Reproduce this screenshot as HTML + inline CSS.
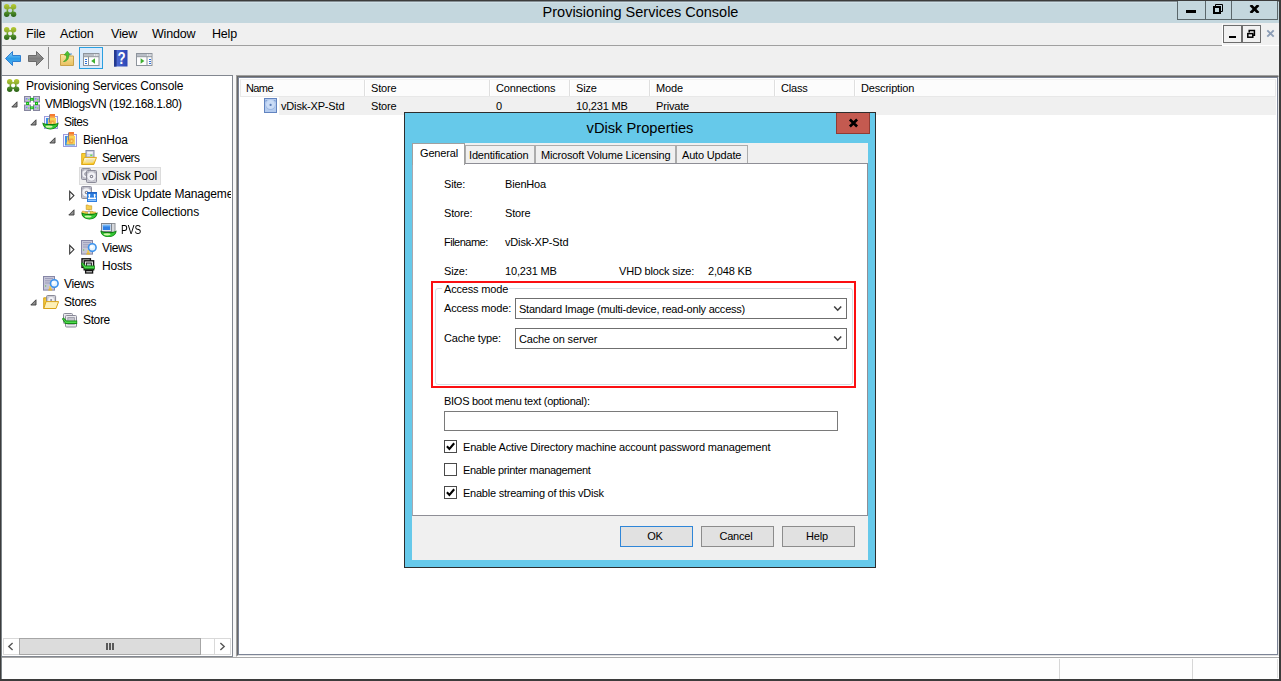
<!DOCTYPE html>
<html><head><meta charset="utf-8"><title>Provisioning Services Console</title>
<style>
*{box-sizing:border-box;margin:0;padding:0}
html,body{width:1281px;height:681px;overflow:hidden;background:#f0f0f0}
body{position:relative;font-family:"Liberation Sans",sans-serif;color:#000}
.abs{position:absolute}
#win{position:absolute;left:0;top:0;width:1281px;height:681px;border:1px solid #3c3c3c;border-right-width:2px;border-bottom-width:2px;border-top-width:2px;border-left-width:2px;background:#f0f0f0}
#titlebar{position:absolute;left:2px;top:2px;width:1277px;height:21px;background:#c4d7de}
#title{position:absolute;left:0;top:2px;width:1281px;text-align:center;font-size:14.5px;line-height:20px;color:#000}
.tb{position:absolute;top:1px;height:19px;border:1px solid #5b676b;border-top:none;background:#c4d7de}
#menubar{position:absolute;left:2px;top:23px;width:1277px;height:22px;background:#f0f0f0}
.mi{position:absolute;top:26px;font-size:12.5px;line-height:16px;letter-spacing:-0.2px}
#toolbar{position:absolute;left:2px;top:46px;width:1277px;height:29px;background:#f0f0f0}
.tree{font-size:12px;letter-spacing:-0.17px;line-height:18px;white-space:nowrap}
.tr{position:absolute;height:18px;margin-top:1px}
.dlg{font-size:11px;letter-spacing:-0.17px;white-space:nowrap;line-height:13px}
.t{position:absolute}
.btn{width:73px;height:21px;border:1px solid #8c8c8c;background:#e1e1e1;text-align:center;line-height:19px;padding-right:3px}
</style></head><body>
<div id="win"></div>
<div class="abs" style="left:1px;top:1px;width:1278px;height:1px;background:#858f94"></div>
<div class="abs" style="left:1px;top:1px;width:1px;height:678px;background:#7b8387"></div>
<div id="titlebar"></div>
<div class="abs" style="left:2px;top:2px;width:1277px;height:1px;background:#d0e0e7"></div>
<div class="abs" style="left:2px;top:2px;width:1px;height:21px;background:#d0e0e7"></div>
<div id="title">Provisioning Services Console</div>

<!-- caption buttons -->
<div class="tb" style="left:1177px;width:29px"></div>
<div class="tb" style="left:1205px;width:27px"></div>
<div class="tb" style="left:1231px;width:47px"></div>
<div class="abs" style="left:1186px;top:10px;width:10px;height:3px;background:#000"></div>
<svg class="abs" style="left:1212px;top:3px" width="12" height="12" viewBox="0 0 12 12"><path d="M3.5 3V1.5h7V8.5H9" fill="none" stroke="#000" stroke-width="1"/><rect x="2" y="4" width="6" height="6" fill="none" stroke="#000" stroke-width="2"/></svg>
<svg class="abs" style="left:1249px;top:5px" width="11" height="8" viewBox="0 0 11 8"><path d="M1.6 0L9.4 8M9.4 0L1.6 8" stroke="#000" stroke-width="2.7"/></svg>

<div id="menubar"></div>
<div class="abs" style="left:2px;top:45px;width:1220px;height:1px;background:#a0a0a0"></div>
<div class="mi" style="left:26px">File</div>
<div class="mi" style="left:60px">Action</div>
<div class="mi" style="left:111px">View</div>
<div class="mi" style="left:152px">Window</div>
<div class="mi" style="left:212px">Help</div>

<div id="toolbar"></div>
<svg class="abs" style="left:4px;top:4px" width="13" height="13" viewBox="0 0 13 13"><linearGradient id="ag1" gradientUnits="userSpaceOnUse" x1="0" y1="0" x2="0" y2="13"><stop offset="0" stop-color="#b9cb33"/><stop offset=".4" stop-color="#88ab2b"/><stop offset=".58" stop-color="#55942a"/><stop offset="1" stop-color="#2a6118"/></linearGradient><mask id="am1"><rect width="13" height="13" fill="#fff"/><circle cx="6.1" cy="6.5" r="2.1" fill="#000"/></mask><g mask="url(#am1)" fill="url(#ag1)"><circle cx="2.7" cy="2.7" r="2.7"/><circle cx="9.6" cy="2.7" r="2.7"/><circle cx="2.7" cy="10.3" r="2.7"/><circle cx="9.6" cy="10.3" r="2.7"/><circle cx="6.1" cy="6.5" r="3.5"/></g></svg>
<svg class="abs" style="left:4px;top:27px" width="13" height="13" viewBox="0 0 13 13"><linearGradient id="ag2" gradientUnits="userSpaceOnUse" x1="0" y1="0" x2="0" y2="13"><stop offset="0" stop-color="#b9cb33"/><stop offset=".4" stop-color="#88ab2b"/><stop offset=".58" stop-color="#55942a"/><stop offset="1" stop-color="#2a6118"/></linearGradient><mask id="am2"><rect width="13" height="13" fill="#fff"/><circle cx="6.1" cy="6.5" r="2.1" fill="#000"/></mask><g mask="url(#am2)" fill="url(#ag2)"><circle cx="2.7" cy="2.7" r="2.7"/><circle cx="9.6" cy="2.7" r="2.7"/><circle cx="2.7" cy="10.3" r="2.7"/><circle cx="9.6" cy="10.3" r="2.7"/><circle cx="6.1" cy="6.5" r="3.5"/></g></svg>
<!-- toolbar icons -->
<svg class="abs" style="left:4px;top:50px" width="18" height="17" viewBox="0 0 18 17"><linearGradient id="bk" x1="0" y1="0" x2="0" y2="1"><stop offset="0" stop-color="#8fd4fb"/><stop offset=".5" stop-color="#2d9be8"/><stop offset="1" stop-color="#4fb2f0"/></linearGradient><path d="M8.5 1.5L1.5 8.5L8.5 15.5V11.5H16.5V5.5H8.5z" fill="url(#bk)" stroke="#2f7fd0" stroke-width="1" stroke-linejoin="round"/></svg>
<svg class="abs" style="left:27px;top:50px" width="18" height="17" viewBox="0 0 18 17"><linearGradient id="fw" x1="0" y1="0" x2="0" y2="1"><stop offset="0" stop-color="#a9a9a9"/><stop offset=".5" stop-color="#7d7d7d"/><stop offset="1" stop-color="#999"/></linearGradient><path d="M9.5 1.5L16.5 8.5L9.5 15.5V11.5H1.5V5.5H9.5z" fill="url(#fw)" stroke="#6b6b6b" stroke-width="1" stroke-linejoin="round"/></svg>
<div class="abs" style="left:48px;top:47px;width:1px;height:22px;background:#8d8d8d"></div>
<svg class="abs" style="left:59px;top:50px" width="16" height="17" viewBox="0 0 16 17"><linearGradient id="fo" x1="0" y1="0" x2="0" y2="1"><stop offset="0" stop-color="#fbe5a0"/><stop offset="1" stop-color="#e9c060"/></linearGradient><path d="M1.5 4.5H6l1 1.5h7.5V15.5H1.5z" fill="url(#fo)" stroke="#c9a24a"/><path d="M4.5 11.5C7 10.5 8 8 7.5 5H5.2L8.3 1.2 11.5 5H9.6C10 9 8 11.5 4.5 11.5z" fill="#4fc12f" stroke="#2f9a1c" stroke-width=".6"/><rect x="10.5" y="3.5" width="2.5" height="1" fill="#5a8fd8"/></svg>
<div class="abs" style="left:79px;top:47px;width:24px;height:22px;border:1px solid #2a9fe0;background:#dbeafa"></div>
<svg class="abs" style="left:83px;top:53px" width="17" height="13" viewBox="0 0 17 13"><rect x=".5" y=".5" width="15.5" height="12" fill="#fdfdfd" stroke="#8e949c"/><rect x="1" y="1" width="14.5" height="2.2" fill="#b9bec6"/><rect x="11" y="1.4" width="1.4" height="1.2" fill="#fff"/><rect x="13.2" y="1.4" width="1.4" height="1.2" fill="#fff"/><path d="M.5 3.7H16M5.5 3.7V12.5" stroke="#8e949c"/><g fill="#2f6fd8" shape-rendering="crispEdges"><rect x="2" y="6" width="2" height="1"/><rect x="2" y="8" width="2" height="1"/><rect x="2" y="10" width="2" height="1"/></g><path d="M12 5.2V10.8L8.2 8z" fill="#3fb030"/></svg>
<svg class="abs" style="left:114px;top:50px" width="14" height="17" viewBox="0 0 14 17"><linearGradient id="hp" x1="0" y1="0" x2="1" y2="0"><stop offset="0" stop-color="#2a3f9a"/><stop offset=".25" stop-color="#4a67d0"/><stop offset="1" stop-color="#2b45b5"/></linearGradient><rect x="0" y="0" width="13.5" height="16.5" fill="url(#hp)"/><rect x="0" y="0" width="2.5" height="16.5" fill="#243a90"/><text x="0" y="0" transform="translate(7.6 14.3) scale(.78 1)" font-family="Liberation Sans, sans-serif" font-size="17" font-weight="bold" fill="#fff" text-anchor="middle">?</text></svg>
<svg class="abs" style="left:136px;top:53px" width="17" height="13" viewBox="0 0 17 13"><rect x=".5" y=".5" width="15.5" height="12" fill="#fdfdfd" stroke="#8e949c"/><rect x="1" y="1" width="14.5" height="2.2" fill="#b9bec6"/><rect x="11" y="1.4" width="1.4" height="1.2" fill="#fff"/><rect x="13.2" y="1.4" width="1.4" height="1.2" fill="#fff"/><path d="M.5 3.7H16M11 3.7V12.5" stroke="#8e949c"/><g fill="#2f6fd8" shape-rendering="crispEdges"><rect x="13" y="6" width="2" height="1"/><rect x="13" y="8" width="2" height="1"/><rect x="13" y="10" width="2" height="1"/></g><path d="M4.6 5.2V10.8L8.4 8z" fill="#3fb030"/></svg>

<!-- mdi child buttons -->
<div class="abs" style="left:1222px;top:24px;width:57px;height:22px;background:#f0f0f0;border-left:1px solid #fff;border-bottom:1px solid #fff"></div>
<div class="abs" style="left:1223px;top:25px;width:19px;height:18px;border:1px solid #6d6d6d;background:#f1f1f1"></div>
<div class="abs" style="left:1242px;top:25px;width:19px;height:18px;border:1px solid #6d6d6d;background:#f1f1f1"></div>
<div class="abs" style="left:1229px;top:36px;width:7px;height:2px;background:#000"></div>
<svg class="abs" style="left:1246px;top:29px" width="10" height="10" viewBox="0 0 10 10"><path d="M3.2 3.5V1.6h5.2v4.6H7" fill="none" stroke="#000" stroke-width="1.5"/><rect x="1.8" y="4.6" width="5" height="3.6" fill="none" stroke="#000" stroke-width="1.5"/></svg>
<svg class="abs" style="left:1266px;top:29px" width="9" height="9" viewBox="0 0 9 9"><path d="M1.3 1.3L7.7 7.7M7.7 1.3L1.3 7.7" stroke="#8c9db5" stroke-width="1.9"/></svg>

<!-- left pane -->
<div class="abs" id="lpane" style="left:2px;top:75px;width:231px;height:582px;background:#fff;border:1px solid #828790;border-left:none"></div>
<!-- right pane -->
<div class="abs" style="left:233px;top:76px;width:3px;height:581px;background:#f7f7f7"></div>
<div class="abs" style="left:236px;top:75px;width:1043px;height:582px;background:#fff;border:1px solid #a0a0a0;border-right-color:#fff;border-bottom-color:#fff"></div>
<div class="abs" style="left:237px;top:76px;width:1042px;height:580px;background:#fff;border:1px solid #696969;border-right-color:#e3e3e3;border-bottom-color:#e3e3e3"></div>
<div class="abs" id="rpane" style="left:238px;top:77px;width:1040px;height:578px;background:#fff;border:1px solid #7c8496"></div>

<!-- TREE -->
<div class="tree">
<div class="abs" style="left:79px;top:167px;width:82px;height:18px;background:#efefef;border:1px solid #dcdcdc"></div>
<div class="tr" style="left:26px;top:76px">Provisioning Services Console</div>
<div class="tr" style="left:45px;top:94px;letter-spacing:-0.39px">VMBlogsVN (192.168.1.80)</div>
<div class="tr" style="left:64px;top:112px;letter-spacing:-0.55px">Sites</div>
<div class="tr" style="left:83px;top:130px">BienHoa</div>
<div class="tr" style="left:102px;top:148px;letter-spacing:-0.56px">Servers</div>
<div class="tr" style="left:102px;top:166px">vDisk Pool</div>
<div class="tr" style="left:102px;top:184px;width:129px;overflow:hidden">vDisk Update Management</div>
<div class="tr" style="left:102px;top:202px;letter-spacing:-0.09px">Device Collections</div>
<div class="tr" style="left:121px;top:220px;transform:scaleX(.84);transform-origin:0 0;letter-spacing:0">PVS</div>
<div class="tr" style="left:102px;top:238px;letter-spacing:-0.37px">Views</div>
<div class="tr" style="left:102px;top:256px">Hosts</div>
<div class="tr" style="left:64px;top:274px;letter-spacing:-0.37px">Views</div>
<div class="tr" style="left:64px;top:292px;letter-spacing:-0.42px">Stores</div>
<div class="tr" style="left:83px;top:310px;letter-spacing:-0.37px">Store</div>
</div>
<!-- expanders -->
<svg class="abs" style="left:11px;top:101px" width="7" height="7" viewBox="0 0 7 7"><path d="M6 .8V6H.8z" fill="#909090" stroke="#3a3a3a" stroke-width=".9"/></svg>
<svg class="abs" style="left:30px;top:119px" width="7" height="7" viewBox="0 0 7 7"><path d="M6 .8V6H.8z" fill="#909090" stroke="#3a3a3a" stroke-width=".9"/></svg>
<svg class="abs" style="left:49px;top:137px" width="7" height="7" viewBox="0 0 7 7"><path d="M6 .8V6H.8z" fill="#909090" stroke="#3a3a3a" stroke-width=".9"/></svg>
<svg class="abs" style="left:68px;top:209px" width="7" height="7" viewBox="0 0 7 7"><path d="M6 .8V6H.8z" fill="#909090" stroke="#3a3a3a" stroke-width=".9"/></svg>
<svg class="abs" style="left:30px;top:299px" width="7" height="7" viewBox="0 0 7 7"><path d="M6 .8V6H.8z" fill="#909090" stroke="#3a3a3a" stroke-width=".9"/></svg>
<svg class="abs" style="left:69px;top:190px" width="6" height="11" viewBox="0 0 6 11"><path d="M.7 1.4V9.8L4.9 5.6z" fill="#fff" stroke="#333" stroke-width="1.1"/></svg>
<svg class="abs" style="left:69px;top:244px" width="6" height="11" viewBox="0 0 6 11"><path d="M.7 1.4V9.8L4.9 5.6z" fill="#fff" stroke="#333" stroke-width="1.1"/></svg>
<!-- tree icons -->
<svg class="abs" style="left:6.5px;top:79px" width="13" height="13" viewBox="0 0 13 13"><linearGradient id="ag3" gradientUnits="userSpaceOnUse" x1="0" y1="0" x2="0" y2="13"><stop offset="0" stop-color="#b9cb33"/><stop offset=".4" stop-color="#88ab2b"/><stop offset=".58" stop-color="#55942a"/><stop offset="1" stop-color="#2a6118"/></linearGradient><mask id="am3"><rect width="13" height="13" fill="#fff"/><circle cx="6.1" cy="6.5" r="2.1" fill="#000"/></mask><g mask="url(#am3)" fill="url(#ag3)"><circle cx="2.7" cy="2.7" r="2.7"/><circle cx="9.6" cy="2.7" r="2.7"/><circle cx="2.7" cy="10.3" r="2.7"/><circle cx="9.6" cy="10.3" r="2.7"/><circle cx="6.1" cy="6.5" r="3.5"/></g></svg>
<svg class="abs" style="left:24px;top:96px" width="16" height="15" viewBox="0 0 16 15"><rect x="0.5" y="0.5" width="6" height="5.5" fill="#b4aedc" stroke="#86869e"/><path d="M1.4 1.6h4.2" stroke="#cfcfd8" stroke-width=".9"/><path d="M1.4 4.6h4.2" stroke="#c4c4cc" stroke-width=".9"/><rect x="2" y="2.3" width="1.3" height="1" fill="#4f8fe0"/><rect x="4" y="2.9" width="1.4" height="1.3" fill="#7cf04c"/><rect x="9.5" y="0.5" width="6" height="5.5" fill="#b4aedc" stroke="#86869e"/><path d="M10.4 1.6h4.2" stroke="#cfcfd8" stroke-width=".9"/><path d="M10.4 4.6h4.2" stroke="#c4c4cc" stroke-width=".9"/><rect x="11" y="2.3" width="1.3" height="1" fill="#4f8fe0"/><rect x="13" y="2.9" width="1.4" height="1.3" fill="#7cf04c"/><rect x="0.5" y="9.0" width="6" height="5.5" fill="#b4aedc" stroke="#86869e"/><path d="M1.4 10.1h4.2" stroke="#cfcfd8" stroke-width=".9"/><path d="M1.4 13.1h4.2" stroke="#c4c4cc" stroke-width=".9"/><rect x="2" y="10.8" width="1.3" height="1" fill="#4f8fe0"/><rect x="4" y="11.4" width="1.4" height="1.3" fill="#7cf04c"/><rect x="9.5" y="9.0" width="6" height="5.5" fill="#b4aedc" stroke="#86869e"/><path d="M10.4 10.1h4.2" stroke="#cfcfd8" stroke-width=".9"/><path d="M10.4 13.1h4.2" stroke="#c4c4cc" stroke-width=".9"/><rect x="11" y="10.8" width="1.3" height="1" fill="#4f8fe0"/><rect x="13" y="11.4" width="1.4" height="1.3" fill="#7cf04c"/><path d="M3.5 6.5v2M12.5 6.5v2" stroke="#1fb81f" stroke-width="1.4"/><g fill="#13b613"><rect x="6.2" y="1.9" width="3.6" height="2.8"/><rect x="6.2" y="10.4" width="3.6" height="2.8"/><rect x="2.1" y="6" width="3" height="3"/><rect x="11" y="6" width="3" height="3"/></g><g fill="#9cf48c"><rect x="7.2" y="2.9" width="1.2" height=".9"/><rect x="7" y="11.4" width="1.8" height=".9"/><rect x="3.1" y="7" width="1" height="1"/><rect x="12" y="7" width="1" height="1"/></g></svg>
<svg class="abs" style="left:42px;top:113.5px" width="17" height="17" viewBox="0 0 17 17"><rect x="2.5" y="2.5" width="13" height="12" fill="#f4f4ff" stroke="#9c9cdc"/><rect x="4" y="4" width="10" height="9.5" fill="#3f8fe6"/><path d="M7 4h7v8.4h-8.4c-.6-1.6 1-2.6 .6-4.2s0-3 .8-4.2z" fill="#f7d357"/><path d="M8.4 6.6h3.8l.6 2.2-1.2 2.6h-3.4l-.8-2.2z" fill="#f2a544"/><path d="M10 8l1.6.4-.4 1.6-1.6-.2z" fill="#f9e27a"/><path d="M7.5 0.5V8.5" stroke="#7c7c94" stroke-width="1"/><rect x="8" y="0" width="5" height="3.8" fill="#f37b34"/><rect x="8" y="2.4" width="5" height="1.4" fill="#f9ae48"/><path d="M0.40000000000000036 8.6C0.6000000000000003 17.67 16.400000000000002 17.67 16.6 8.6C13.600000000000001 10.60 3.4000000000000004 10.60 0.40000000000000036 8.6z" fill="#0f800f"/><path d="M1.5000000000000004 10.1C3.0000000000000004 16.49 14.000000000000002 16.49 15.500000000000002 10.1C12.600000000000001 12.00 4.4 12.00 1.5000000000000004 10.1z" fill="#35c835"/><ellipse cx="7.1" cy="12.68" rx="3.4" ry="1.1" fill="#e4fcb8" opacity=".9"/></svg>
<svg class="abs" style="left:63px;top:132px" width="15" height="16" viewBox="0 0 15 16"><rect x="0.5" y="2.5" width="13" height="12" fill="#f4f4ff" stroke="#9c9cdc"/><rect x="2" y="4" width="10" height="9.5" fill="#3f8fe6"/><path d="M5 4h7v8.4h-8.4c-.6-1.6 1-2.6 .6-4.2s0-3 .8-4.2z" fill="#f7d357"/><path d="M6.4 6.6h3.8l.6 2.2-1.2 2.6h-3.4l-.8-2.2z" fill="#f2a544"/><path d="M8 8l1.6.4-.4 1.6-1.6-.2z" fill="#f9e27a"/><path d="M5.5 0.5V8.5" stroke="#7c7c94" stroke-width="1"/><rect x="6" y="0" width="5" height="3.8" fill="#f37b34"/><rect x="6" y="2.4" width="5" height="1.4" fill="#f9ae48"/></svg>
<svg class="abs" style="left:81px;top:149.5px" width="16" height="15" viewBox="0 0 16 15"><linearGradient id="sfg" x1="0" y1="0" x2=".3" y2="1"><stop offset="0" stop-color="#fffdf0"/><stop offset=".55" stop-color="#fdeaa0"/><stop offset="1" stop-color="#f8c826"/></linearGradient><path d="M.7 3.5h4.3l1 1.2h6.2V14.5H.7z" fill="#f9cf36" stroke="#dba716" stroke-width=".9"/><rect x="5" y=".5" width="8" height="9" fill="#c4c8e0" stroke="#8a90a8"/><rect x="6.2" y="1.8" width="5.6" height="2" fill="#f4f6fa"/><rect x="6.2" y="4.6" width="5.6" height="1.4" fill="#dfe3ee"/><rect x="9.2" y="4.6" width="2.2" height="1.3" fill="#5fdc3f"/><path d="M.9 14.5L3.2 7.4H15.5L12.8 14.5z" fill="url(#sfg)" stroke="#e0a918" stroke-width="1"/><path d="M4.4 12.6h7.4l.9-3.2h-7.4z" fill="#e8dcae" opacity=".8"/></svg>
<svg class="abs" style="left:81px;top:168px" width="17" height="15" viewBox="0 0 17 15"><rect x="0.5" y="0.5" width="9" height="11" rx="1" fill="#c2c2cb" stroke="#8e8e9c"/><path d="M1.4 1.4h1.8l-1.8 1.8zM8.6 1.4h-1.8l1.8 1.8z" fill="#8e8e9c" opacity=".7"/><circle cx="5.0" cy="6.5" r="3.7" fill="#a2a2b0"/><circle cx="5.0" cy="6.0" r="3.7" fill="#f6f6fa" opacity=".95"/><circle cx="5.0" cy="6.0" r="1.7" fill="#82828f"/><circle cx="5.0" cy="6.0" r=".7" fill="#fff"/><rect x="5.5" y="2.5" width="10" height="12" rx="1" fill="#cacad2" stroke="#8a8a98"/><path d="M6.4 3.4h1.8l-1.8 1.8zM14.6 3.4h-1.8l1.8 1.8z" fill="#8a8a98" opacity=".7"/><circle cx="10.5" cy="9.0" r="4.2" fill="#a2a2b0"/><circle cx="10.5" cy="8.5" r="4.2" fill="#f6f6fa" opacity=".95"/><circle cx="10.5" cy="8.5" r="1.7" fill="#82828f"/><circle cx="10.5" cy="8.5" r=".7" fill="#fff"/></svg>
<svg class="abs" style="left:81px;top:186px" width="17" height="16" viewBox="0 0 17 16"><rect x="0.5" y="0.5" width="10" height="12" rx="1" fill="#c2c2cb" stroke="#8e8e9c"/><path d="M1.4 1.4h1.8l-1.8 1.8zM9.6 1.4h-1.8l1.8 1.8z" fill="#8e8e9c" opacity=".7"/><circle cx="5.5" cy="7.0" r="4.2" fill="#a2a2b0"/><circle cx="5.5" cy="6.5" r="4.2" fill="#f6f6fa" opacity=".95"/><circle cx="5.5" cy="6.5" r="1.7" fill="#82828f"/><circle cx="5.5" cy="6.5" r=".7" fill="#fff"/><rect x="6" y="6" width="10" height="10" fill="#2f7fe0"/><rect x="6" y="6" width="10" height="1.4" fill="#1f63c4"/><path d="M8.4 8.8v3M13.6 8.8v3" stroke="#fff" stroke-width="1.2"/><circle cx="8.4" cy="9" r="1" fill="#fff"/><circle cx="13.6" cy="9" r="1" fill="#fff"/><rect x="7" y="11.6" width="8" height="1.4" fill="#fff"/><rect x="7" y="13.6" width="8" height="1.4" fill="#8fc4ff"/></svg>
<svg class="abs" style="left:80.5px;top:203.5px" width="17" height="17" viewBox="0 0 17 17"><path d="M8 4.5v3M4 9V7.5h8V9" fill="none" stroke="#9aa6c8" stroke-width=".9"/><path d="M5.2 1h2l.6.8h2.9v3.7h-5.5z" fill="#f6cf52" stroke="#c9971f" stroke-width=".6"/><path d="M1.2 7.2h2l.6.8h2.9v3.7h-5.5z" fill="#f6cf52" stroke="#c9971f" stroke-width=".6"/><path d="M9.2 7.2h2l.6.8h2.9v3.7h-5.5z" fill="#f6cf52" stroke="#c9971f" stroke-width=".6"/><path d="M0.40000000000000036 8.2C0.6000000000000003 17.80 16.400000000000002 17.80 16.6 8.2C13.600000000000001 10.20 3.4000000000000004 10.20 0.40000000000000036 8.2z" fill="#0f800f"/><path d="M1.5000000000000004 9.7C3.0000000000000004 16.55 14.000000000000002 16.55 15.500000000000002 9.7C12.600000000000001 11.60 4.4 11.60 1.5000000000000004 9.7z" fill="#35c835"/><ellipse cx="7.1" cy="12.52" rx="3.4" ry="1.1" fill="#e4fcb8" opacity=".9"/></svg>
<svg class="abs" style="left:99.5px;top:221.5px" width="17" height="17" viewBox="0 0 17 17"><rect x="9.5" y="1.5" width="5.5" height="9" fill="#d6d8dc" stroke="#8e9298"/><rect x="1.5" y="1.5" width="10" height="8" fill="#e6e8ec" stroke="#7e848c"/><rect x="2.8" y="2.8" width="7.4" height="5.2" fill="#2f7fe4"/><rect x="2.8" y="2.8" width="7.4" height="1.6" fill="#6fb4f4"/><rect x="4.5" y="10" width="4" height="1.5" fill="#9aa0a8"/><path d="M0.40000000000000036 8.4C0.6000000000000003 17.20 16.400000000000002 17.20 16.6 8.4C13.600000000000001 10.40 3.4000000000000004 10.40 0.40000000000000036 8.4z" fill="#0f800f"/><path d="M1.5000000000000004 9.9C3.0000000000000004 16.06 14.000000000000002 16.06 15.500000000000002 9.9C12.600000000000001 11.80 4.4 11.80 1.5000000000000004 9.9z" fill="#35c835"/><ellipse cx="7.1" cy="12.36" rx="3.4" ry="1.1" fill="#e4fcb8" opacity=".9"/></svg>
<svg class="abs" style="left:81px;top:240px" width="16" height="15" viewBox="0 0 16 15"><rect x=".5" y=".5" width="11" height="13.6" fill="#c6c6d8" stroke="#8686a6"/><path d="M2 2.6h8M2 4.8h8M2 7h5" stroke="#9c9cba" stroke-width="1"/><rect x="2" y="9.4" width="1.2" height="1.2" fill="#6fc05f"/><path d="M5.2 14.4c.2-1.6 1-2.2 2-2.2s1.8.6 2 2.2z" fill="#e9b830"/><circle cx="7.2" cy="11.2" r="1.1" fill="#f3cb52"/><circle cx="11.3" cy="7.6" r="3.8" fill="#e6f4ff" stroke="#3c92ec" stroke-width="1.6"/><circle cx="10.6" cy="6.8" r="1.6" fill="#fff"/></svg>
<svg class="abs" style="left:81px;top:258px" width="16" height="16" viewBox="0 0 16 16"><rect x="1" y=".8" width="8.4" height="8.6" fill="#f4f4f4" stroke="#111" stroke-width="1.4"/><rect x="3.2" y="2.8" width="9.4" height="9" fill="#f4f4f4" stroke="#111" stroke-width="1.4"/><rect x="5.4" y="5" width="5" height="3.4" fill="#b8c4cc" stroke="#222" stroke-width="1"/><rect x="4.6" y="12.6" width="7" height="2.4" fill="#e0e0e0" stroke="#111" stroke-width="1.3"/><path d="M-.2 5.6L1.6 4.2 4.6 7.6H13.8V11.2H3.4z" fill="#178a17"/><path d="M.9 5.6L1.5 5.2 4.2 8.4H13V10.3H3.8z" fill="#4fdc4f"/></svg>
<svg class="abs" style="left:43px;top:276px" width="16" height="15" viewBox="0 0 16 15"><rect x=".5" y=".5" width="11" height="13.6" fill="#c6c6d8" stroke="#8686a6"/><path d="M2 2.6h8M2 4.8h8M2 7h5" stroke="#9c9cba" stroke-width="1"/><rect x="2" y="9.4" width="1.2" height="1.2" fill="#6fc05f"/><path d="M5.2 14.4c.2-1.6 1-2.2 2-2.2s1.8.6 2 2.2z" fill="#e9b830"/><circle cx="7.2" cy="11.2" r="1.1" fill="#f3cb52"/><circle cx="11.3" cy="7.6" r="3.8" fill="#e6f4ff" stroke="#3c92ec" stroke-width="1.6"/><circle cx="10.6" cy="6.8" r="1.6" fill="#fff"/></svg>
<svg class="abs" style="left:43px;top:294.5px" width="16" height="14" viewBox="0 0 16 14"><path d="M.7 2.8h3.6l1 1.2h7.2V13.5H.7z" fill="#f5c93a" stroke="#cf9c12" stroke-width=".9"/><rect x="3.6" y=".5" width="9" height="9" rx="1" fill="#cdcdd4" stroke="#8a8a98"/><circle cx="8.1" cy="5" r="2.9" fill="#f2f2f6"/><circle cx="8.1" cy="5" r="1" fill="#8a8a98"/><path d="M.8 13.5L3 6.6H15.6L13 13.5z" fill="#fdf0b8" stroke="#d9a41a" stroke-width="1"/></svg>
<svg class="abs" style="left:62px;top:312.5px" width="16" height="15" viewBox="0 0 16 15"><rect x="1.5" y=".5" width="9" height="10" rx="1" fill="#e8e8ec" stroke="#8a8a98"/><rect x="3.5" y="2.5" width="11" height="11.5" rx="1" fill="#e8e8ec" stroke="#8a8a98"/><rect x="5.8" y="4.6" width="6.6" height="6.6" fill="#c4c4cc" stroke="#9696a4" stroke-width=".8"/><path d="M-.2 5.8L1.6 4.4 4.6 7.6H15.2V11H3.4z" fill="#178a17"/><path d="M.9 5.8L1.5 5.4 4.2 8.4H14.4V10.1H3.8z" fill="#4fdc4f"/></svg>
<!-- tree hscroll -->
<div class="abs" style="left:2px;top:637px;width:230px;height:19px;background:#fff"></div>
<div class="abs" style="left:3px;top:638px;width:228px;height:17px;border:1px solid #d9d9d9;background:#fff"></div>
<div class="abs" style="left:214px;top:638px;width:1px;height:17px;background:#d9d9d9"></div>
<div class="abs" style="left:19px;top:638px;width:182px;height:17px;border:1px solid #a6a6a6;background:#dcdcdc"></div>
<svg class="abs" style="left:7px;top:642px" width="8" height="9" viewBox="0 0 8 9"><path d="M5.6 1L1.8 4.5 5.6 8" fill="none" stroke="#555" stroke-width="1.4"/></svg>
<svg class="abs" style="left:218px;top:642px" width="8" height="9" viewBox="0 0 8 9"><path d="M2.4 1L6.2 4.5 2.4 8" fill="none" stroke="#555" stroke-width="1.4"/></svg>
<div class="abs" style="left:106px;top:643px;width:2px;height:7px;background:#5a5a5a"></div>
<div class="abs" style="left:109px;top:643px;width:2px;height:7px;background:#5a5a5a"></div>
<div class="abs" style="left:112px;top:643px;width:2px;height:7px;background:#5a5a5a"></div>
<!-- status bar -->
<div class="abs" style="left:2px;top:657px;width:1277px;height:22px;background:#fefefe;border-top:1px solid #a9a9a9"></div>

<!-- LIST VIEW -->
<div class="abs" style="left:240px;top:79px;width:1036px;height:18px;background:#fcfcfc;border:1px solid #e8e8e8;border-top-color:#f0f0f0"></div>
<div class="abs" style="left:364px;top:80px;width:2px;height:16px;background:#dfdfdf;border-right:1px solid #fff"></div>
<div class="abs" style="left:489px;top:80px;width:2px;height:16px;background:#dfdfdf;border-right:1px solid #fff"></div>
<div class="abs" style="left:569px;top:80px;width:2px;height:16px;background:#dfdfdf;border-right:1px solid #fff"></div>
<div class="abs" style="left:649px;top:80px;width:2px;height:16px;background:#dfdfdf;border-right:1px solid #fff"></div>
<div class="abs" style="left:774px;top:80px;width:2px;height:16px;background:#dfdfdf;border-right:1px solid #fff"></div>
<div class="abs" style="left:854px;top:80px;width:2px;height:16px;background:#dfdfdf;border-right:1px solid #fff"></div>
<div class="abs" style="left:279px;top:97px;width:997px;height:18px;background:#f0f0f0"></div>
<div class="dlg">
<div class="t" style="left:246px;top:82px;letter-spacing:-0.6px">Name</div>
<div class="t" style="left:371px;top:82px">Store</div>
<div class="t" style="left:496px;top:82px">Connections</div>
<div class="t" style="left:576px;top:82px">Size</div>
<div class="t" style="left:656px;top:82px">Mode</div>
<div class="t" style="left:781px;top:82px">Class</div>
<div class="t" style="left:861px;top:82px">Description</div>
<div class="t" style="left:281px;top:100px">vDisk-XP-Std</div>
<div class="t" style="left:371px;top:100px">Store</div>
<div class="t" style="left:496px;top:100px">0</div>
<div class="t" style="left:576px;top:100px">10,231 MB</div>
<div class="t" style="left:656px;top:100px">Private</div>
</div>
<svg class="abs" style="left:264px;top:98px" width="13" height="15" viewBox="0 0 13 15"><rect x=".5" y=".5" width="12" height="14" fill="#b4cbee" stroke="#6284c0"/><path d="M1.5 2v2.2L3.4 2zM11.5 2v2.2L9.6 2z" fill="#7f9fd2"/><circle cx="6.5" cy="7.4" r="4.7" fill="#9bb7e2"/><circle cx="6.5" cy="6.6" r="4.5" fill="#cadcf6"/><circle cx="6.6" cy="6.9" r="1.1" fill="#5a7cb6"/></svg>
<!-- STATUS dividers -->
<div class="abs" style="left:1059px;top:659px;width:1px;height:20px;background:#d7d7d7"></div>
<div class="abs" style="left:1192px;top:659px;width:1px;height:20px;background:#d7d7d7"></div>
<div class="abs" style="left:1277px;top:659px;width:1px;height:19px;background:#dcdcdc"></div>

<!-- DIALOG -->
<div class="abs" style="left:404px;top:112px;width:472px;height:456px;background:#66c9ea;border:1px solid #2d2d2d"></div>
<div class="abs" style="left:404px;top:117px;width:472px;text-align:center;font-size:14.7px;line-height:22px">vDisk Properties</div>
<div class="abs" style="left:836px;top:113px;width:34px;height:21px;background:#c45a50;border:1px solid #8f3b34;border-top:none"></div>
<svg class="abs" style="left:848px;top:118px" width="11" height="10" viewBox="0 0 11 10"><path d="M1.9 1.6L9.1 8.4M9.1 1.6L1.9 8.4" stroke="#000" stroke-width="2.7"/></svg>
<!-- client -->
<div class="abs" style="left:412px;top:143px;width:456px;height:417px;background:#f0f0f0"></div>
<!-- tab page -->
<div class="abs" style="left:412px;top:163px;width:456px;height:353px;background:#fff;border:1px solid #8e8e96;border-left-color:#a8a8b0"></div>
<!-- tabs -->
<div class="abs" style="left:465px;top:145px;width:70px;height:18px;background:#f0f0f0;border:1px solid #acacac;border-bottom:none"></div>
<div class="abs" style="left:535px;top:145px;width:141px;height:18px;background:#f0f0f0;border:1px solid #acacac;border-bottom:none"></div>
<div class="abs" style="left:676px;top:145px;width:72px;height:18px;background:#f0f0f0;border:1px solid #acacac;border-bottom:none"></div>
<div class="abs" style="left:412px;top:143px;width:53px;height:22px;background:#fff;border:1px solid #a0a0a0;border-bottom:none"></div>
<div class="dlg">
<div class="t" style="left:420px;top:147px">General</div>
<div class="t" style="left:469px;top:149px">Identification</div>
<div class="t" style="left:541px;top:149px">Microsoft Volume Licensing</div>
<div class="t" style="left:682px;top:149px">Auto Update</div>
<div class="t" style="left:444px;top:178px">Site:</div><div class="t" style="left:505px;top:178px">BienHoa</div>
<div class="t" style="left:444px;top:207px">Store:</div><div class="t" style="left:505px;top:207px">Store</div>
<div class="t" style="left:444px;top:236px;letter-spacing:-0.5px">Filename:</div><div class="t" style="left:505px;top:236px">vDisk-XP-Std</div>
<div class="t" style="left:444px;top:265px">Size:</div><div class="t" style="left:505px;top:265px">10,231 MB</div>
<div class="t" style="left:619px;top:265px">VHD block size:</div><div class="t" style="left:708px;top:265px">2,048 KB</div>
</div>
<!-- groupbox -->
<div class="abs" style="left:435px;top:288px;width:418px;height:97px;border:1px solid #d5dfe5;border-radius:3px"></div>
<div class="abs dlg" style="left:442px;top:283px;width:67px;height:12px;background:#fff;padding-left:2px">Access mode</div>
<!-- red highlight -->
<div class="abs" style="left:431px;top:281px;width:425px;height:107px;border:2px solid #fb0f12"></div>
<div class="dlg">
<div class="t" style="left:444px;top:302px">Access mode:</div>
<div class="t" style="left:444px;top:332px">Cache type:</div>
</div>
<div class="abs dlg" style="left:515px;top:298px;width:332px;height:21px;border:1px solid #6f6f6f;background:#fff;padding:4px 0 0 3px;letter-spacing:-0.225px">Standard Image (multi-device, read-only access)</div>
<div class="abs dlg" style="left:515px;top:328px;width:332px;height:21px;border:1px solid #6f6f6f;background:#fff;padding:4px 0 0 3px">Cache on server</div>
<svg class="abs" style="left:833px;top:305px" width="10" height="8" viewBox="0 0 10 8"><path d="M1.2 1.5L4.7 5.2 8.2 1.5" fill="none" stroke="#404040" stroke-width="1.6"/></svg>
<svg class="abs" style="left:833px;top:335px" width="10" height="8" viewBox="0 0 10 8"><path d="M1.2 1.5L4.7 5.2 8.2 1.5" fill="none" stroke="#404040" stroke-width="1.6"/></svg>
<!-- bios -->
<div class="abs dlg" style="left:444px;top:395px;letter-spacing:-0.27px">BIOS boot menu text (optional):</div>
<div class="abs" style="left:444px;top:411px;width:394px;height:20px;border:1px solid #7a7a7a;background:#fff"></div>
<!-- checkboxes -->
<div class="abs" style="left:444px;top:440px;width:13px;height:13px;border:1px solid #4a4a4a;background:#fff"></div>
<div class="abs" style="left:444px;top:463px;width:13px;height:13px;border:1px solid #4a4a4a;background:#fff"></div>
<div class="abs" style="left:444px;top:486px;width:13px;height:13px;border:1px solid #4a4a4a;background:#fff"></div>
<svg class="abs" style="left:446px;top:442px" width="9" height="9" viewBox="0 0 9 9"><path d="M.9 4.3L3.4 6.9 8.2 1.3" fill="none" stroke="#000" stroke-width="2.1"/></svg>
<svg class="abs" style="left:446px;top:488px" width="9" height="9" viewBox="0 0 9 9"><path d="M.9 4.3L3.4 6.9 8.2 1.3" fill="none" stroke="#000" stroke-width="2.1"/></svg>
<div class="dlg">
<div class="t" style="left:463px;top:441px">Enable Active Directory machine account password management</div>
<div class="t" style="left:463px;top:464px;letter-spacing:-0.33px">Enable printer management</div>
<div class="t" style="left:463px;top:487px;letter-spacing:-0.24px">Enable streaming of this vDisk</div>
</div>
<!-- buttons -->
<div class="abs dlg btn" style="left:620px;top:526px;border-color:#2f86d8">OK</div>
<div class="abs dlg btn" style="left:701px;top:526px">Cancel</div>
<div class="abs dlg btn" style="left:782px;top:526px">Help</div>

</body></html>
